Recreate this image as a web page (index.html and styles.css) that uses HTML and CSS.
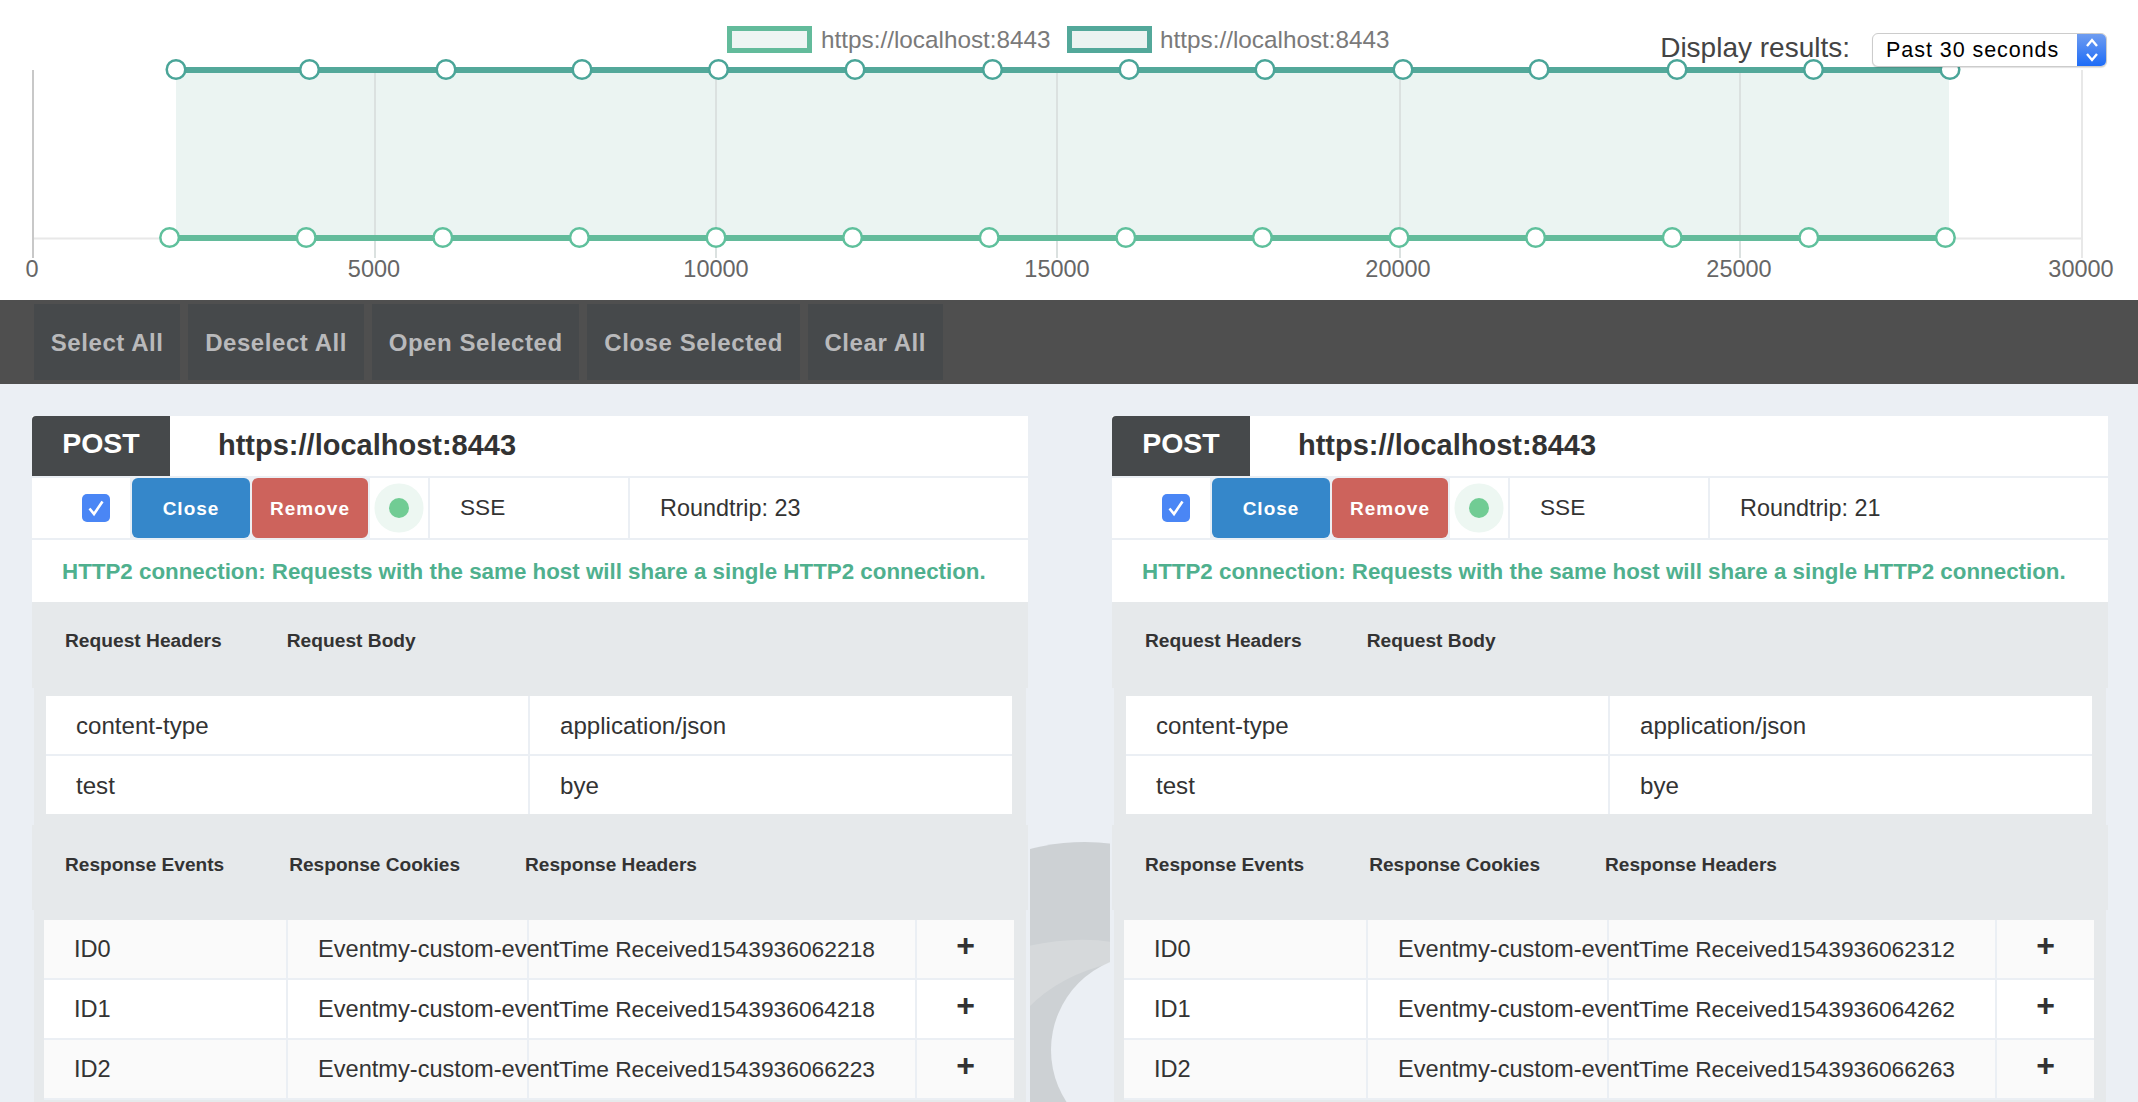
FILE: index.html
```html
<!DOCTYPE html>
<html lang="en">
<head>
    <meta charset="UTF-8">
    <title>Request results</title>
    <link rel="stylesheet" href="styles.css">
</head>
<body>
<div class="chart-area">
    <svg class="chart" width="2138" height="300" viewBox="0 0 2138 300">
        <rect class="range" x="176" y="70" width="1773" height="168"/>
        <line class="grid" x1="375" y1="70" x2="375" y2="258"/>
        <line class="grid" x1="716" y1="70" x2="716" y2="258"/>
        <line class="grid" x1="1057" y1="70" x2="1057" y2="258"/>
        <line class="grid" x1="1400" y1="70" x2="1400" y2="258"/>
        <line class="grid" x1="1740" y1="70" x2="1740" y2="258"/>
        <line class="grid-end" x1="2082" y1="70" x2="2082" y2="258"/>
        <line class="grid-end" x1="33" y1="238.5" x2="2082" y2="238.5"/>
        <line class="axis" x1="33" y1="70" x2="33" y2="258"/>

        <line class="series-a" x1="176" y1="70" x2="1950" y2="70"/>
        <line class="series-b" x1="170" y1="238" x2="1945" y2="238"/>

        <g class="points-a">
            <circle cx="176" cy="69.5" r="9.3"/><circle cx="309.5" cy="69.5" r="9.3"/>
            <circle cx="446" cy="69.5" r="9.3"/><circle cx="582" cy="69.5" r="9.3"/>
            <circle cx="718.5" cy="69.5" r="9.3"/><circle cx="855" cy="69.5" r="9.3"/>
            <circle cx="992.5" cy="69.5" r="9.3"/><circle cx="1129" cy="69.5" r="9.3"/>
            <circle cx="1265" cy="69.5" r="9.3"/><circle cx="1403" cy="69.5" r="9.3"/>
            <circle cx="1539" cy="69.5" r="9.3"/><circle cx="1677" cy="69.5" r="9.3"/>
            <circle cx="1813.5" cy="69.5" r="9.3"/><circle cx="1950" cy="69.5" r="9.3"/>
        </g>
        <g class="points-b">
            <circle cx="169.6" cy="237.5" r="9.3"/><circle cx="306.2" cy="237.5" r="9.3"/>
            <circle cx="442.8" cy="237.5" r="9.3"/><circle cx="579.4" cy="237.5" r="9.3"/>
            <circle cx="716" cy="237.5" r="9.3"/><circle cx="852.6" cy="237.5" r="9.3"/>
            <circle cx="989.2" cy="237.5" r="9.3"/><circle cx="1125.8" cy="237.5" r="9.3"/>
            <circle cx="1262.4" cy="237.5" r="9.3"/><circle cx="1399" cy="237.5" r="9.3"/>
            <circle cx="1535.6" cy="237.5" r="9.3"/><circle cx="1672.2" cy="237.5" r="9.3"/>
            <circle cx="1808.8" cy="237.5" r="9.3"/><circle cx="1945.4" cy="237.5" r="9.3"/>
        </g>

        <g class="ticks">
            <text x="32" y="277">0</text>
            <text x="374" y="277">5000</text>
            <text x="716" y="277">10000</text>
            <text x="1057" y="277">15000</text>
            <text x="1398" y="277">20000</text>
            <text x="1739" y="277">25000</text>
            <text x="2081" y="277">30000</text>
        </g>

        <rect class="legend-a" x="729.5" y="28.5" width="80" height="22"/>
        <text class="legend-text" x="821" y="48">https://localhost:8443</text>
        <rect class="legend-b" x="1069.5" y="28.5" width="80" height="22"/>
        <text class="legend-text" x="1160" y="48">https://localhost:8443</text>
    </svg>

    <div class="display-results">
        <span class="display-label">Display results:</span>
        <div class="select-box">
            <span class="select-value">Past 30 seconds</span>
            <span class="select-arrows">
                <svg width="16" height="28" viewBox="0 0 16 28">
                    <path d="M3 10 L8 4 L13 10 M3 18 L8 24 L13 18" fill="none" stroke="#fff" stroke-width="2.4"/>
                </svg>
            </span>
        </div>
    </div>
</div>

<div class="toolbar">
    <button class="tool-button">Select All</button>
    <button class="tool-button">Deselect All</button>
    <button class="tool-button">Open Selected</button>
    <button class="tool-button">Close Selected</button>
    <button class="tool-button">Clear All</button>
</div>

<div class="main">
    <!-- logo behind the cards, only the gap between them shows it -->
    <svg class="bg-logo" width="84" height="272" viewBox="1028 830 84 272">
        <circle cx="1085" cy="1061" r="219" fill="#cdd1d4"/>
        <path d="M1028 946 Q1075 936 1112 942 L1112 963 Q1060 975 1028 1008 Z" fill="#d6d9db"/>
        <circle cx="1146" cy="1050" r="95" fill="#ebeff4"/>
    </svg>

    <div class="card">
        <div class="card-head">
            <div class="method">POST</div>
            <div class="url">https://localhost:8443</div>
        </div>
        <div class="card-actions">
            <div class="check-cell">
                <span class="check-box">
                    <svg width="20" height="20" viewBox="0 0 20 20"><path d="M3.5 10.5 L8 16 L16.5 3.5" fill="none" stroke="#fff" stroke-width="2.6"/></svg>
                </span>
            </div>
            <button class="close-button">Close</button>
            <button class="remove-button">Remove</button>
            <div class="status-cell"><span class="status-dot"></span></div>
            <div class="type-cell">SSE</div>
            <div class="time-cell">Roundtrip: 23</div>
        </div>
        <div class="http2-note">HTTP2 connection: Requests with the same host will share a single HTTP2 connection.</div>
        <div class="tabs tabs-request">
            <span>Request Headers</span>
            <span>Request Body</span>
        </div>
        <div class="panel panel-request">
            <table class="kv-table">
                <tr><td>content-type</td><td>application/json</td></tr>
                <tr><td>test</td><td>bye</td></tr>
            </table>
        </div>
        <div class="tabs tabs-response">
            <span>Response Events</span>
            <span>Response Cookies</span>
            <span>Response Headers</span>
        </div>
        <div class="panel panel-response">
            <table class="events-table">
                <tr><td>ID0</td><td>Eventmy-custom-event</td><td>Time Received1543936062218</td><td class="plus">+</td></tr>
                <tr><td>ID1</td><td>Eventmy-custom-event</td><td>Time Received1543936064218</td><td class="plus">+</td></tr>
                <tr><td>ID2</td><td>Eventmy-custom-event</td><td>Time Received1543936066223</td><td class="plus">+</td></tr>
            </table>
        </div>
    </div>

    <div class="card">
        <div class="card-head">
            <div class="method">POST</div>
            <div class="url">https://localhost:8443</div>
        </div>
        <div class="card-actions">
            <div class="check-cell">
                <span class="check-box">
                    <svg width="20" height="20" viewBox="0 0 20 20"><path d="M3.5 10.5 L8 16 L16.5 3.5" fill="none" stroke="#fff" stroke-width="2.6"/></svg>
                </span>
            </div>
            <button class="close-button">Close</button>
            <button class="remove-button">Remove</button>
            <div class="status-cell"><span class="status-dot"></span></div>
            <div class="type-cell">SSE</div>
            <div class="time-cell">Roundtrip: 21</div>
        </div>
        <div class="http2-note">HTTP2 connection: Requests with the same host will share a single HTTP2 connection.</div>
        <div class="tabs tabs-request">
            <span>Request Headers</span>
            <span>Request Body</span>
        </div>
        <div class="panel panel-request">
            <table class="kv-table">
                <tr><td>content-type</td><td>application/json</td></tr>
                <tr><td>test</td><td>bye</td></tr>
            </table>
        </div>
        <div class="tabs tabs-response">
            <span>Response Events</span>
            <span>Response Cookies</span>
            <span>Response Headers</span>
        </div>
        <div class="panel panel-response">
            <table class="events-table">
                <tr><td>ID0</td><td>Eventmy-custom-event</td><td>Time Received1543936062312</td><td class="plus">+</td></tr>
                <tr><td>ID1</td><td>Eventmy-custom-event</td><td>Time Received1543936064262</td><td class="plus">+</td></tr>
                <tr><td>ID2</td><td>Eventmy-custom-event</td><td>Time Received1543936066263</td><td class="plus">+</td></tr>
            </table>
        </div>
    </div>
</div>
</body>
</html>
```

FILE: styles.css
```css
html, body {
    margin: 0;
    height: 1102px;
    overflow: hidden;
}
body {
    font-family: "Liberation Sans", Arial, sans-serif;
    background-color: #ebeff4;
    color: #333;
}

/* chart */
.chart-area {
    position: relative;
    height: 300px;
    background: #fff;
}
.chart {
    display: block;
}
.range {
    fill: #ebf4f2;
}
.grid {
    stroke: #dbe1e0;
    stroke-width: 2;
}
.grid-end {
    stroke: #e8e8e8;
    stroke-width: 2;
}
.axis {
    stroke: #c8c8c8;
    stroke-width: 2;
}
.series-a {
    stroke: #53a89a;
    stroke-width: 6;
}
.series-b {
    stroke: #63bb9b;
    stroke-width: 6;
}
.points-a circle {
    fill: #fff;
    stroke: #4aa598;
    stroke-width: 2.5;
}
.points-b circle {
    fill: #fff;
    stroke: #5fc09c;
    stroke-width: 2.5;
}
.ticks text {
    font-size: 23.5px;
    fill: #666;
    text-anchor: middle;
}
.legend-text {
    font-size: 24.3px;
    fill: #7a7a7a;
}
.legend-a {
    fill: #eef5f3;
    stroke: #63bb9b;
    stroke-width: 5;
}
.legend-b {
    fill: #ebf3f1;
    stroke: #53a89a;
    stroke-width: 5;
}
.display-results {
    position: absolute;
    top: 33px;
    right: 31px;
    display: flex;
    align-items: center;
    gap: 22px;
}
.display-label {
    font-size: 28px;
    color: #444;
    margin-top: -4px;
}
.select-box {
    display: flex;
    justify-content: space-between;
    width: 235px;
    height: 34px;
    box-sizing: border-box;
    background: #fff;
    border: 1px solid #ccc;
    border-radius: 6px;
    box-shadow: 0 1px 1px rgba(0, 0, 0, 0.12);
    overflow: hidden;
}
.select-value {
    font-size: 21.5px;
    letter-spacing: 0.95px;
    line-height: 32px;
    color: #000;
    padding-left: 13px;
}
.select-arrows {
    display: flex;
    align-items: center;
    justify-content: center;
    width: 29px;
    background: linear-gradient(#6f9cf0, #1e6cf7);
}

/* toolbar */
.toolbar {
    display: flex;
    gap: 8px;
    height: 84px;
    box-sizing: border-box;
    padding: 4px 34px;
    background-color: #4f4f4f;
}
.tool-button {
    padding: 2px 16.8px 0;
    border: none;
    background-color: #46494b;
    color: #b9b9bb;
    font-family: inherit;
    font-size: 24px;
    font-weight: bold;
    letter-spacing: 0.56px;
}

/* cards */
.main {
    position: relative;
    display: flex;
    gap: 84px;
    padding: 32px 30px 0 32px;
}
.bg-logo {
    position: absolute;
    left: 1028px;
    top: 446px;
}
.card {
    position: relative;
    width: 996px;
    flex: none;
    background-color: #ebeff4;
    box-shadow: 0 0 0 2px #ebeff4;
}
.card-head {
    display: flex;
    height: 60px;
    margin-bottom: 2px;
    background: #fff;
}
.method {
    width: 138px;
    box-sizing: border-box;
    padding-top: 11px;
    background-color: #46494b;
    border-top-left-radius: 4px;
    color: #fff;
    font-size: 28.5px;
    font-weight: bold;
    text-align: center;
}
.url {
    padding: 13px 0 0 48px;
    font-size: 29px;
    font-weight: bold;
}
.card-actions {
    display: flex;
    height: 60px;
    margin-bottom: 2px;
    font-size: 23.4px;
}
.card-actions > * {
    margin-right: 2px;
    background: #fff;
}
.check-cell {
    width: 98px;
    box-sizing: border-box;
    display: flex;
    align-items: center;
    padding-left: 50px;
}
.check-box {
    display: flex;
    align-items: center;
    justify-content: center;
    width: 28px;
    height: 28px;
    border-radius: 5px;
    background-color: #4a86f5;
}
.close-button, .remove-button {
    border: none;
    border-radius: 6px;
    color: #fff;
    font-family: inherit;
    font-size: 19px;
    font-weight: bold;
    letter-spacing: 1px;
    padding: 2px 0 0;
}
.close-button {
    width: 118px;
    background-color: #3587ca;
}
.remove-button {
    width: 116px;
    background-color: #cd635c;
}
.status-cell {
    width: 58px;
    display: flex;
    align-items: center;
    justify-content: center;
}
.status-dot {
    width: 20px;
    height: 20px;
    border-radius: 50%;
    background-color: #71cc94;
    box-shadow: 0 0 0 14.5px #edf7f2;
}
.type-cell {
    width: 168px;
    padding-left: 30px;
    line-height: 59px;
    font-size: 22.6px;
}
.time-cell {
    flex: 1;
    margin-right: 0;
    padding-left: 30px;
    line-height: 60px;
}
.http2-note {
    height: 62px;
    box-sizing: border-box;
    padding: 19px 0 0 30px;
    background: #fff;
    color: #4fb08e;
    font-size: 22.35px;
    font-weight: bold;
}
.tabs {
    display: flex;
    gap: 65px;
    box-sizing: border-box;
    padding-left: 33px;
    background-color: #e6e9eb;
    font-weight: bold;
}
.tabs-request {
    height: 86px;
    padding-top: 28px;
    font-size: 19.2px;
}
.tabs-response {
    height: 85px;
    padding-top: 29px;
    font-size: 19.1px;
}
.panel {
    margin: 0 2px;
    background-color: #e6e9eb;
}
.panel-request {
    height: 137px;
    padding: 8px 14px 0 12px;
    box-sizing: border-box;
}
.panel-response {
    height: 192px;
    padding: 10px 12px 0 10px;
    box-sizing: border-box;
}
table {
    width: 100%;
    table-layout: fixed;
    border-collapse: separate;
    border-spacing: 0;
    font-size: 23.6px;
}
td {
    height: 60px;
    box-sizing: border-box;
    padding: 1px 0 0 30px;
    border-bottom: 2px solid #ebeff4;
    border-right: 2px solid #ebeff4;
    background: #fff;
    white-space: nowrap;
}
td:last-child {
    border-right: none;
}
.kv-table {
    font-size: 24.1px;
}
.kv-table td:first-child {
    width: 484px;
}
.kv-table tr:last-child td {
    height: 58px;
    border-bottom: none;
}
.events-table td:nth-child(1) {
    width: 244px;
}
.events-table td:nth-child(2) {
    width: 241px;
}
.events-table td:nth-child(3) {
    width: 388px;
    font-size: 22.8px;
}
.events-table tr:nth-child(odd) td {
    background: #fafafa;
}
.events-table .plus {
    padding: 0 0 8px 0;
    text-align: center;
    font-size: 32px;
    font-weight: bold;
}
```
